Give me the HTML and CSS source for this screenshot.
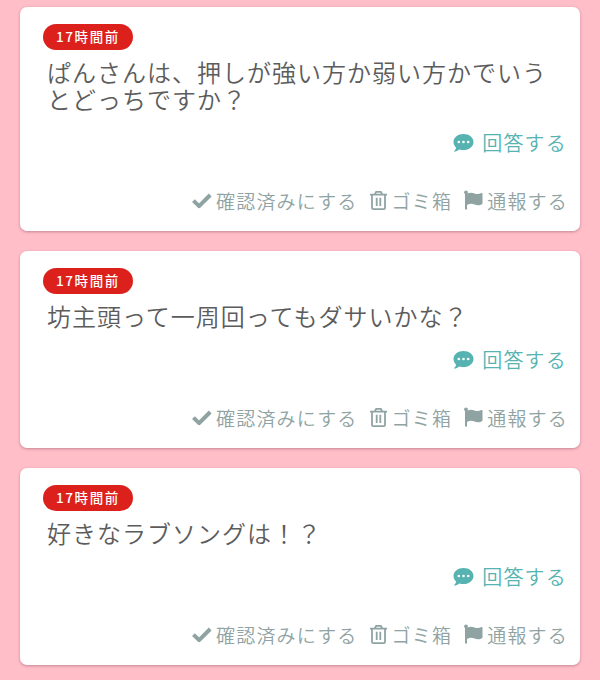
FILE: index.html
```html
<!DOCTYPE html>
<html lang="ja">
<head>
    <meta charset="UTF-8">
    <meta name="viewport" content="width=device-width, initial-scale=1.0">
    <title>質問一覧</title>
    <link rel="stylesheet" href="styles.css">
</head>
<body>

<svg class="sprite">
    <symbol id="comment" viewBox="0 0 20 20">
        <path fill="currentColor" d="M10 1C4.500 1 0 4.500 0 9c0 2.200 1 4.200 2.600 5.600C2.400 16.200 1.400 17.400.3 18.500c2.300 0 4.200-.9 5.500-2.100 1.300.5 2.700.7 4.200.7 5.500 0 10-3.600 10-8.100S15.500 1 10 1z"/>
        <circle cx="5.300" cy="9" r="1.300" fill="#fff"/>
        <circle cx="10" cy="9" r="1.300" fill="#fff"/>
        <circle cx="14.700" cy="9" r="1.300" fill="#fff"/>
    </symbol>
    <symbol id="check" viewBox="0 0 18 18">
        <path fill="none" stroke="currentColor" stroke-width="3.600" stroke-linejoin="round" d="M1.300 9.500 6.400 14.500 16.400 4.500"/>
    </symbol>
    <symbol id="trash" viewBox="0 0 17 20">
        <path fill="none" stroke="currentColor" stroke-width="1.800" stroke-linejoin="round" d="M0 4.700h17M4.800 4.400l1.400-2.600h4.600l1.400 2.600M2 4.900v13q0 1.200 1.200 1.200h10.600q1.200 0 1.200-1.200v-13M6.700 7.700v8.300M10.300 7.700v8.300"/>
    </symbol>
    <symbol id="flag" viewBox="0 0 19 20">
        <circle cx="2" cy="2.300" r="1.900" fill="currentColor"/>
        <path fill="currentColor" d="M1 2h2v1.600c3-1.400 5.300-1 7.500-.2 2.500.9 4.600.7 7-.4q1-.4 1 .6v10.100c-2.700 1.900-5.400 1.700-8 .8-2.500-.9-4.800-.9-7.500.4V19.500H1z"/>
    </symbol>
</svg>

<div class="card">
    <span class="time">17時間前</span>
    <p class="question">ぱんさんは、押しが強い方か弱い方かでいうとどっちですか？</p>
    <div class="reply">
        <svg class="icon-comment"><use href="#comment"/></svg>回答する
    </div>
    <div class="actions">
        <span class="action"><svg class="icon-check"><use href="#check"/></svg>確認済みにする</span>
        <span class="action"><svg class="icon-trash"><use href="#trash"/></svg>ゴミ箱</span>
        <span class="action"><svg class="icon-flag"><use href="#flag"/></svg>通報する</span>
    </div>
</div>

<div class="card">
    <span class="time">17時間前</span>
    <p class="question">坊主頭って一周回ってもダサいかな？</p>
    <div class="reply">
        <svg class="icon-comment"><use href="#comment"/></svg>回答する
    </div>
    <div class="actions">
        <span class="action"><svg class="icon-check"><use href="#check"/></svg>確認済みにする</span>
        <span class="action"><svg class="icon-trash"><use href="#trash"/></svg>ゴミ箱</span>
        <span class="action"><svg class="icon-flag"><use href="#flag"/></svg>通報する</span>
    </div>
</div>

<div class="card">
    <span class="time">17時間前</span>
    <p class="question">好きなラブソングは！？</p>
    <div class="reply">
        <svg class="icon-comment"><use href="#comment"/></svg>回答する
    </div>
    <div class="actions">
        <span class="action"><svg class="icon-check"><use href="#check"/></svg>確認済みにする</span>
        <span class="action"><svg class="icon-trash"><use href="#trash"/></svg>ゴミ箱</span>
        <span class="action"><svg class="icon-flag"><use href="#flag"/></svg>通報する</span>
    </div>
</div>

</body>
</html>
```

FILE: styles.css
```css
* {
    box-sizing: border-box;
}
body {
    margin: 0;
    padding: 7px 20px 15px;
    background-color: #ffbec8;
    font-family: "Noto Sans CJK JP", sans-serif;
    font-weight: 350;
    color: #5c5c5c;
}
.sprite {
    display: none;
}
.card {
    background-color: #fff;
    border-radius: 7px;
    box-shadow: 0 1px 3px rgba(90, 30, 50, 0.35);
    padding: 17px 12px 16px 23px;
    margin-bottom: 20px;
}
.card:last-child {
    margin-bottom: 0;
}
.time {
    display: flex;
    align-items: center;
    width: 90px;
    height: 26px;
    padding: 0 0 3px 13px;
    border-radius: 13px;
    background-color: #dc211c;
    color: #fff;
    font-size: 13.5px;
    font-weight: 500;
    letter-spacing: 1.6px;
    white-space: nowrap;
}
.question {
    margin: 8px 0 16px 4px;
    font-size: 24px;
    line-height: 27px;
    letter-spacing: 1px;
    width: 505px;
}
.reply {
    display: flex;
    align-items: center;
    justify-content: flex-end;
    height: 29px;
    padding-right: 1px;
    color: #56b3b1;
    font-size: 20px;
    letter-spacing: 1.2px;
}
.actions {
    display: flex;
    justify-content: flex-end;
    gap: 12px;
    margin-top: 28px;
    color: #8fa3a3;
    font-size: 19px;
    letter-spacing: 1.2px;
}
.action {
    display: flex;
    align-items: center;
    height: 30px;
    white-space: nowrap;
}
.icon-comment {
    width: 21px;
    height: 20px;
    margin-right: 8px;
}
.icon-check {
    width: 20px;
    height: 20px;
    margin-right: 4px;
}
.icon-trash {
    width: 17px;
    height: 20px;
    margin-right: 5px;
}
.icon-flag {
    width: 19px;
    height: 20px;
    margin-right: 4px;
}
```
